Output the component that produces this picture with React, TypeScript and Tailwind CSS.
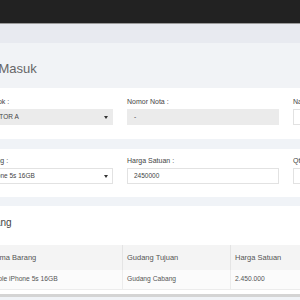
import React from "react";

function Caret() {
  return (
    <span className="ml-auto mr-[4px] w-0 h-0 border-l-[2.5px] border-r-[2.5px] border-t-[3px] border-l-transparent border-r-transparent border-t-[#333]" />
  );
}

function Field({
  label,
  value,
  select,
  disabled,
}: {
  label: string;
  value: string;
  select?: boolean;
  disabled?: boolean;
}) {
  return (
    <div className="flex flex-col">
      <div className="text-[7px] leading-[8px] text-[#444] whitespace-nowrap mb-[3px]">{label}</div>
      <div
        className={`h-[16px] flex items-center border text-[6.5px] text-[#444] whitespace-nowrap ${
          select ? "pl-[7px]" : "pl-[6px]"
        } ${disabled ? "bg-[#ebebeb] border-[#ebebeb]" : "bg-white border-[#e2e2e2]"}`}
      >
        <span>{value}</span>
        {select && <Caret />}
      </div>
    </div>
  );
}

const cols = "grid grid-cols-[25px_137px_108px_108px]";

export default function App() {
  return (
    <div className="w-[300px] h-[300px] overflow-hidden bg-[#f0f3f7] font-['Liberation_Sans',Arial,sans-serif]">
      <div className="h-[24px] bg-[#222222] border-b border-[#9a9a9a]" />
      <div className="h-[19px] bg-[#e8eaf0]" />
      <div className="h-[45px] bg-[#f1f3f6] flex items-center">
        <h1 className="-ml-[47px] text-[13px] leading-[16px] text-[#666] whitespace-nowrap mt-[7px]">Barang Masuk</h1>
      </div>

      <div className="bg-white -ml-[51px] pl-[12px] pt-[10px] pb-[14px]">
        <div className="grid grid-cols-[152px_152px_152px] gap-x-[14px]">
          <Field label="Pilih Pemasok :" value="DISTRIBUTOR A" select disabled />
          <Field label="Nomor Nota :" value="-" disabled />
          <Field label="Nama Penerima :" value="" />
        </div>
      </div>

      <div className="bg-white -ml-[51px] pl-[12px] pt-[8px] pb-[13px] mt-[10px]">
        <div className="grid grid-cols-[152px_152px_152px] gap-x-[14px]">
          <Field label="Nama Barang :" value="Apple iPhone 5s 16GB" select />
          <Field label="Harga Satuan :" value="2450000" />
          <Field label="Qty :" value="1" />
        </div>
      </div>

      <div className="bg-white -ml-[51px] pl-[12px] pt-[11px] mt-[9px] h-[91px] border-b-[3px] border-[#d4d4d4]">
        <h2 className="text-[10px] leading-[12px] text-[#444] whitespace-nowrap">List Barang</h2>
        <div className="mt-[16px] text-[#555] whitespace-nowrap">
          <div className={`${cols} bg-[#f4f4f4] h-[25px] items-stretch text-[7.5px]`}>
            <div className="pl-[4px] flex items-center border-r border-[#e4e4e4]">No</div>
            <div className="pl-[4px] flex items-center border-r border-[#e4e4e4]">Nama Barang</div>
            <div className="pl-[4px] flex items-center border-r border-[#e4e4e4]">Gudang Tujuan</div>
            <div className="pl-[4px] flex items-center border-r border-[#e4e4e4]">Harga Satuan</div>
          </div>
          <div className={`${cols} bg-[#fbfbfb] h-[20px] border-b border-[#ececec] text-[6.7px]`}>
            <div className="pl-[4px] flex items-center border-r border-[#ececec]">1</div>
            <div className="pl-[4px] flex items-center border-r border-[#ececec]">Apple iPhone 5s 16GB</div>
            <div className="pl-[4px] flex items-center border-r border-[#ececec]">Gudang Cabang</div>
            <div className="pl-[4px] flex items-center border-r border-[#ececec]">2.450.000</div>
          </div>
        </div>
      </div>
    </div>
  );
}
